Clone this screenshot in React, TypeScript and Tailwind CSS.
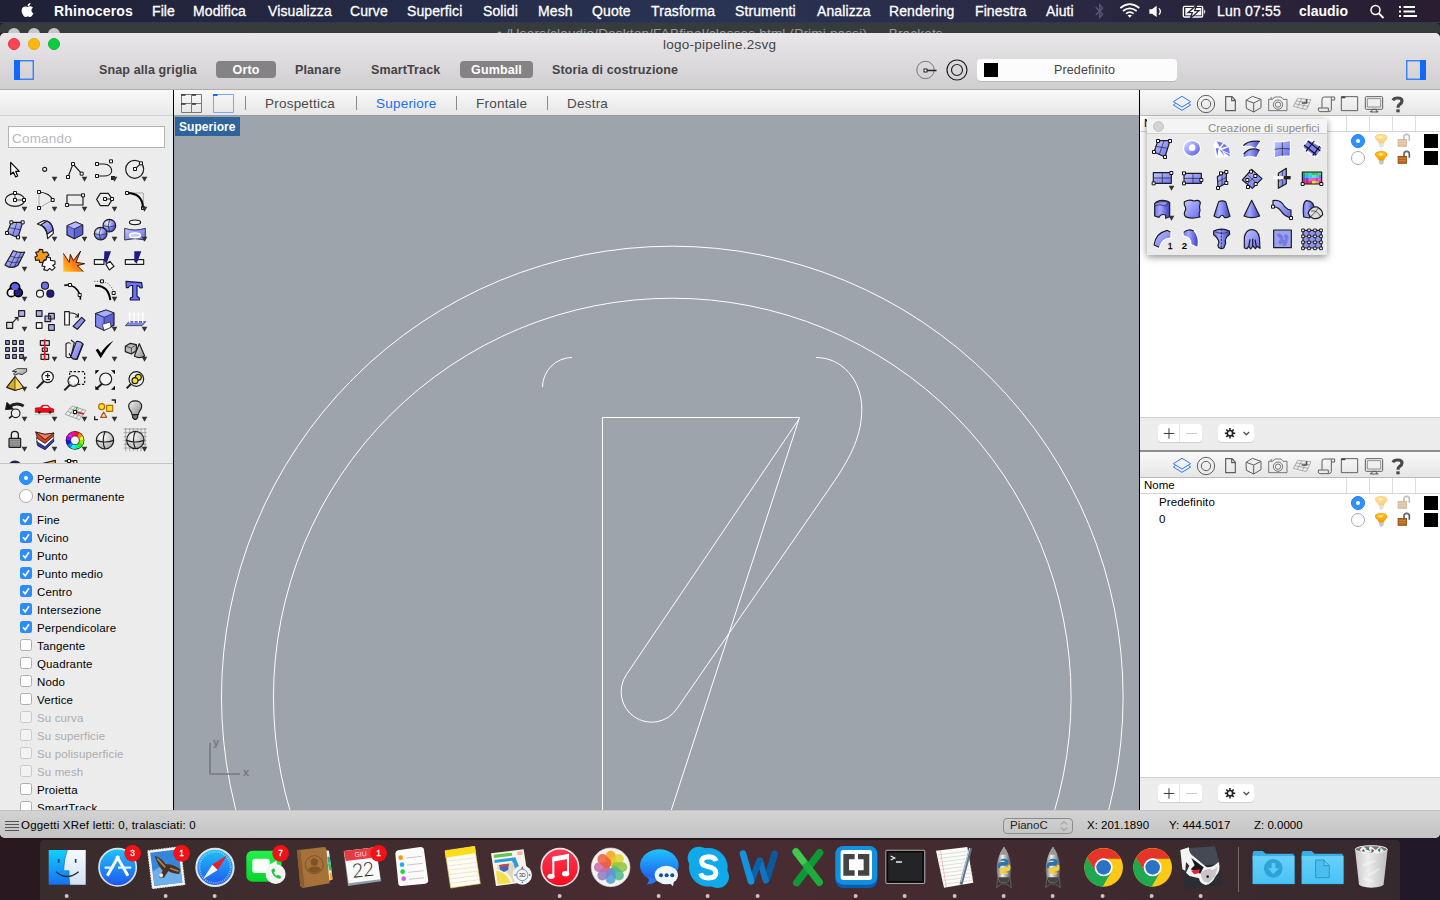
import React from "react";
import { FaApple, FaBluetoothB } from "react-icons/fa";

type Kids = { children?: React.ReactNode };

const INK = "#1c1c1c";

/* ---------- shared drawing helpers ---------- */

function Defs() {
  return (
    <svg className="absolute h-0 w-0" aria-hidden="true">
      <defs>
        <linearGradient id="blue" x1="0" y1="0" x2="1" y2="1">
          <stop offset="0" stopColor="#c3c7ff" />
          <stop offset="1" stopColor="#666cf0" />
        </linearGradient>
        <linearGradient id="tube" x1="0" y1="0" x2="1" y2="0">
          <stop offset="0" stopColor="#6e74f2" />
          <stop offset=".35" stopColor="#a4a9ff" />
          <stop offset="1" stopColor="#3c42c4" />
        </linearGradient>
        <radialGradient id="ball" cx=".35" cy=".3" r=".8">
          <stop offset="0" stopColor="#eef" />
          <stop offset=".5" stopColor="#8c92f5" />
          <stop offset="1" stopColor="#3c43b8" />
        </radialGradient>
        <radialGradient id="grayball" cx=".35" cy=".3" r=".8">
          <stop offset="0" stopColor="#fff" />
          <stop offset="1" stopColor="#a5a5a5" />
        </radialGradient>
        <linearGradient id="gray" x1="0" y1="0" x2="1" y2="1">
          <stop offset="0" stopColor="#f4f4f4" />
          <stop offset="1" stopColor="#8c8c8c" />
        </linearGradient>
        <linearGradient id="fire" x1="0" y1="1" x2="1" y2="0">
          <stop offset="0" stopColor="#ffc81c" />
          <stop offset=".45" stopColor="#ff7a12" />
          <stop offset="1" stopColor="#e81808" />
        </linearGradient>
        <linearGradient id="bulb" x1="0" y1="0" x2="0" y2="1">
          <stop offset="0" stopColor="#ffc61a" />
          <stop offset="1" stopColor="#ff9a00" />
        </linearGradient>
        <linearGradient id="sky" x1="0" y1="0" x2="0" y2="1">
          <stop offset="0" stopColor="#1fc4fb" />
          <stop offset="1" stopColor="#1f55ee" />
        </linearGradient>
        <linearGradient id="finderL" x1="0" y1="0" x2="0" y2="1">
          <stop offset="0" stopColor="#12d0ff" />
          <stop offset="1" stopColor="#1670f2" />
        </linearGradient>
        <linearGradient id="finderR" x1="0" y1="0" x2="0" y2="1">
          <stop offset="0" stopColor="#f6fafe" />
          <stop offset="1" stopColor="#d3e2f2" />
        </linearGradient>
        <linearGradient id="green" x1="0" y1="0" x2="0" y2="1">
          <stop offset="0" stopColor="#22f04d" />
          <stop offset="1" stopColor="#06d52c" />
        </linearGradient>
        <linearGradient id="red" x1="0" y1="0" x2="0" y2="1">
          <stop offset="0" stopColor="#ff3a55" />
          <stop offset="1" stopColor="#f50b20" />
        </linearGradient>
        <linearGradient id="rocket" x1="0" y1="0" x2="1" y2="0">
          <stop offset="0" stopColor="#6a6a6a" />
          <stop offset=".4" stopColor="#f0f0f0" />
          <stop offset="1" stopColor="#4a4a4a" />
        </linearGradient>
        <linearGradient id="folder" x1="0" y1="0" x2="0" y2="1">
          <stop offset="0" stopColor="#6ad0fa" />
          <stop offset="1" stopColor="#46c3f5" />
        </linearGradient>
        <linearGradient id="trash" x1="0" y1="0" x2="1" y2="0">
          <stop offset="0" stopColor="#c9c9c9" />
          <stop offset=".4" stopColor="#ececec" />
          <stop offset="1" stopColor="#bdbdbd" />
        </linearGradient>
      </defs>
    </svg>
  );
}

function N({ x, y }: { x: number; y: number }) {
  return <rect x={x - 4.5} y={y - 4.5} width={9} height={9} fill="#fff" stroke="#111" strokeWidth={3} />;
}

function Nodes({ p }: { p: [number, number][] }) {
  return (
    <>
      {p.map(([x, y]) => (
        <N key={x + "," + y} x={x} y={y} />
      ))}
    </>
  );
}

function Cell({ x, y, tri, children }: Kids & { x: number; y: number; tri?: boolean }) {
  return (
    <svg viewBox={`${x} ${y} 90 90`} className="block h-[30px] w-[30px] overflow-visible" fill="none" stroke={INK} strokeWidth={3.5} strokeLinejoin="round">
      {children}
      {tri && <path d={`M${x + 65} ${y + 65}h17l-8.500 15z`} fill="#333" stroke="none" />}
    </svg>
  );
}

/* ---------- main tool palette ---------- */

const HUES = [0, 30, 60, 90, 120, 150, 180, 210, 240, 270, 300, 330];

function arc(cx: number, cy: number, r: number, a: number, b: number) {
  const p = (d: number) => `${cx + r * Math.cos((d * Math.PI) / 180)} ${cy + r * Math.sin((d * Math.PI) / 180)}`;
  return `M${p(a)}A${r} ${r} 0 0 1 ${p(b)}`;
}

function ToolGrid() {
  return (
    <div className="grid w-[150px] grid-cols-5 auto-rows-[30px]">
      <Cell x={0} y={105}>
        <path d="M32 127V164L40 156L47 171L53 168L47 154H58Z" fill="#fff" stroke="#000" />
      </Cell>
      <Cell x={90} y={105} tri><circle cx={134} cy={148} r={6} fill="#fff" /></Cell>
      <Cell x={180} y={105} tri>
        <path d="M204 171L219 132L245 161" />
        <Nodes p={[[204, 171], [219, 132], [245, 161]]} />
      </Cell>
      <Cell x={270} y={105} tri>
        <path d="M291 132H312C326 132 335 142 335 152C335 162 325 168 312 168H291" />
        <Nodes p={[[291, 132], [291, 168], [333, 124]]} />
        <rect x={333} y={168} width={12} height={12} fill="#222" stroke="none" />
      </Cell>
      <Cell x={360} y={105} tri>
        <circle cx={404} cy={148} r={27} /><path d="M405 147L423 130" />
        <Nodes p={[[405, 147], [423, 130]]} />
      </Cell>

      <Cell x={0} y={195} tri>
        <ellipse cx={45} cy={240} rx={29} ry={19} /><path d="M45 219V240H72" strokeWidth={2.5} />
        <Nodes p={[[45, 219], [45, 240], [72, 240]]} />
      </Cell>
      <Cell x={90} y={195} tri>
        <path d="M158 240L117 264V216" stroke="#999" strokeWidth={2.5} />
        <path d="M117 216Q150 219 158 240" />
        <Nodes p={[[117, 216], [158, 240], [117, 264]]} />
      </Cell>
      <Cell x={180} y={195} tri>
        <rect x={201} y={225} width={48} height={30} />
        <Nodes p={[[249, 226], [201, 255]]} />
      </Cell>
      <Cell x={270} y={195} tri>
        <path d="M290 238L301 220H325L337 238L325 257H301ZM315 237H337" />
        <Nodes p={[[315, 237], [336, 237]]} />
      </Cell>
      <Cell x={360} y={195} tri>
        <path d="M381 219H430V264" stroke="#999" strokeWidth={2.5} />
        <path d="M381 219C412 219 428 234 429 264" stroke="#000" strokeWidth={6} />
        <Nodes p={[[381, 219], [429, 264]]} />
      </Cell>

      <Cell x={0} y={285} tri>
        <path d="M34 307H68L54 353L21 339Z" fill="url(#blue)" /><path d="M51 307L38 346M28 323L60 329" strokeWidth={2} />
        <Nodes p={[[34, 307], [68, 307], [54, 352], [21, 339]]} />
      </Cell>
      <Cell x={90} y={285} tri>
        <path d="M112 312L130 302C150 303 160 318 160 340L143 356C143 335 135 318 112 312Z" fill="#fff" />
        <path d="M122 315L141 303C152 308 158 318 159 331L142 342C140 329 132 318 122 315Z" fill="url(#blue)" />
      </Cell>
      <Cell x={180} y={285} tri>
        <path d="M201 317L227 306L248 315V343L223 356L201 345Z" fill="#7278f2" />
        <path d="M201 317L227 306L248 315L223 327Z" fill="#b5b9ff" strokeWidth={2} /><path d="M223 327L248 315V343L223 356Z" fill="#5a60d2" strokeWidth={2} />
      </Cell>
      <Cell x={270} y={285} tri>
        <circle cx={328} cy={317} r={19} fill="url(#ball)" /><circle cx={302} cy={341} r={19} fill="url(#ball)" />
        <path d="M284 341Q302 350 320 341M302 323Q293 342 302 359M310 317Q328 325 346 317M329 299Q320 317 329 335" strokeWidth={2} />
      </Cell>
      <Cell x={360} y={285} tri>
        <ellipse cx={405} cy={307} rx={17} ry={7} fill="#f4f4f4" />
        <path d="M374 325Q405 335 436 325V360Q405 352 374 360Z" fill="url(#blue)" strokeWidth={2.5} />
        <ellipse cx={405} cy={346} rx={16} ry={7} fill="#c6c9ff" stroke="#fff" strokeWidth={5} />
      </Cell>

      <Cell x={0} y={375} tri>
        <path d="M40 392Q60 400 74 396L54 436Q34 449 15 435Z" fill="url(#blue)" />
        <path d="M31 408Q48 418 66 411M22 423Q40 432 59 425M51 396L28 442M63 398L42 443" strokeWidth={2} />
      </Cell>
      <Cell x={90} y={375}>
        <path d="M107 397L116 395L118 388L128 389L129 398L141 396L147 405L139 411L140 418L132 420L129 428L119 427L118 420L107 421L105 411L112 407Z" fill="#f59a1b" />
        <path d="M130 424L139 419L140 411L151 413L152 421L165 423L165 433L158 436L165 443L156 451L149 445L142 452L131 449L135 440L126 438Z" fill="#fff" />
      </Cell>
      <Cell x={180} y={375}>
        <path d="M190 400L208 427L211 403L220 422L242 393L228 427L254 431L232 437L250 455H190Z" fill="url(#fire)" stroke="none" />
        <path d="M190 400L208 427L211 403L220 422L242 393L228 427L254 431L232 437L250 455" stroke="#1a0800" strokeWidth={2.5} />
      </Cell>
      <Cell x={270} y={375}>
        <path d="M283 419H312V433H283Z" fill="#fff" /><path d="M318 433L330 424L342 439L328 450Z" fill="#fff" />
        <path d="M313 394H333L319 432L312 421Z" fill="#1f1b85" stroke="none" />
      </Cell>
      <Cell x={360} y={375}>
        <path d="M376 419H431V433H376Z" fill="#fff" /><path d="M403 394H424L410 431L403 424Z" fill="#1f1b85" stroke="none" />
      </Cell>

      <Cell x={0} y={-15} tri>
        <circle cx={45} cy={22} r={14} fill="#5d63e8" stroke="#000" strokeWidth={5} /><circle cx={34} cy={38} r={12} fill="#f2f2fa" stroke="#000" strokeWidth={5} />
        <circle cx={55} cy={38} r={12} fill="#22207c" stroke="#000" strokeWidth={5} /><circle cx={45} cy={21} r={10} fill="#5d63e8" stroke="none" />
      </Cell>
      <Cell x={90} y={-15}>
        <circle cx={135} cy={17} r={10.5} fill="#6d73f0" /><circle cx={120} cy={41} r={10.5} fill="#fff" /><circle cx={151} cy={41} r={10.5} fill="#201c84" />
      </Cell>
      <Cell x={180} y={-15}>
        <path d="M193 16Q225 10 240 44Q242 53 241 59" stroke="#000" strokeWidth={5} /><Nodes p={[[210, 15], [239, 45]]} />
      </Cell>
      <Cell x={270} y={-15} tri>
        <path d="M285 17Q325 15 331 60" stroke="#000" strokeWidth={6} />
        <path d="M283 4H305Q335 10 341 38" strokeDasharray="3 5" strokeWidth={2.5} /><Nodes p={[[306, 4], [341, 39]]} />
      </Cell>
      <Cell x={360} y={-15}>
        <path d="M378 4L425 8L427 23L421 24Q418 17 411 17V49L418 54V60H391V54L398 51V17Q387 15 385 23L379 23Z" fill="#6d73f2" stroke="#15154a" />
      </Cell>

      <Cell x={0} y={75} tri>
        <path d="M20 127H38V145H20Z" fill="#ddd" /><path d="M56 92H74V109H56Z" fill="#a9aef5" /><path d="M38 127L53 113M44 113H54V122" />
      </Cell>
      <Cell x={90} y={75}>
        <path d="M109 92H126V109H109Z" fill="#a9aef5" /><path d="M109 128H126V145H109Z" fill="#fff" />
        <path d="M146 100H163V117H146ZM135 108H152V125H135ZM146 134H163V151H146Z" fill="#a9aef5" />
      </Cell>
      <Cell x={180} y={75}>
        <path d="M194 95H208V135H194Z" fill="#fff" /><path d="M245 112L255 121L232 148L219 139Z" fill="#8d93f5" />
        <path d="M210 99Q227 98 234 109M235 100V111H225" />
      </Cell>
      <Cell x={270} y={75} tri>
        <path d="M287 101L318 90L342 99V136L312 151L287 139Z" fill="#5a60d6" /><path d="M287 101L318 90L342 99L312 112Z" fill="#a8adff" strokeWidth={2} /><path d="M287 101L312 112V151L287 139Z" fill="#8188f6" strokeWidth={2} />
        <path d="M307 133L331 126L333 142L312 151Z" fill="#fff" strokeWidth={2} />
      </Cell>
      <Cell x={360} y={75} tri>
        <path d="M387 125H437L426 137H376Z" fill="#7f86f0" strokeWidth={2} />
        <path d="M389 128V101M402 128V101M415 128V101M428 128V101" stroke="#fff" strokeWidth={4} />
        <path d="M383 106L389 94L395 106ZM396 106L402 94L408 106ZM409 106L415 94L421 106ZM422 106L428 94L434 106Z" fill="#fff" stroke="none" />
      </Cell>

      <Cell x={0} y={165} tri>
        {[0, 1, 2].map((r) => [0, 1, 2].map((c) => <rect key={`${r}${c}`} x={17 + c * 21} y={182 + r * 21} width={11} height={11} fill="#a4a9ee" />))}
      </Cell>
      <Cell x={90} y={165} tri>
        <path d="M121 182H148V196H121ZM127 204H142V214H127ZM123 223H146V238H123Z" fill="#ddd" /><path d="M134 178V241" stroke="#e0182a" strokeWidth={5} />
      </Cell>
      <Cell x={180} y={165} tri>
        <path d="M198 192Q206 184 215 193V229Q206 237 198 230Z" fill="#eee" /><path d="M213 180L223 188L213 230L207 220" fill="#ddd" />
        <path d="M229 185Q240 182 249 192L231 238Q221 240 212 231Z" fill="url(#blue)" />
        <path d="M249 192L231 238" strokeWidth={4} />
      </Cell>
      <Cell x={270} y={165} tri>
        <path d="M287 210L294 206L303 219Q315 197 340 182Q317 208 302 235Z" fill="#000" stroke="none" />
      </Cell>
      <Cell x={360} y={165} tri>
        <path d="M376 199L391 190L409 194V212L394 222L376 215Z" fill="#bbb" /><path d="M376 199L394 204L409 194M394 204V222" strokeWidth={2} />
        <path d="M418 191L434 228Q418 238 403 228Z" fill="url(#gray)" />
      </Cell>

      <Cell x={0} y={255} tri>
        <path d="M37 274L52 266H80V275L66 284L55 281L44 286L41 281L50 275Z" fill="url(#gray)" strokeWidth={2.5} /><path d="M45 290L71 323L45 331L20 322Z" fill="#d9ad2c" /><path d="M45 290L71 323L45 331Z" fill="#f7d760" strokeWidth={2} />
      </Cell>
      <Cell x={90} y={255}>
        <path d="M110 325L132 303" strokeWidth={6} /><circle cx={143} cy={291} r={17} fill="#f7f7f7" /><path d="M143 280V294M136 287H150M137 299H150" />
      </Cell>
      <Cell x={180} y={255}>
        <path d="M209 275H254V313H209Z" strokeDasharray="7 5" /><path d="M193 331L209 315" strokeWidth={6} /><circle cx={220} cy={303} r={16} fill="#ffffffb0" />
      </Cell>
      <Cell x={270} y={255}>
        <path d="M291 325L306 311" strokeWidth={6} /><circle cx={317} cy={297} r={18} fill="#f4f4f4" />
        <path d="M286 271H298L286 283ZM345 271H333L345 283ZM286 329V317L298 329ZM345 329V317L333 329Z" fill="#000" stroke="none" />
      </Cell>
      <Cell x={360} y={255}>
        <path d="M380 325L396 309" strokeWidth={6} /><circle cx={409} cy={297} r={22} fill="#eee" />
        <circle cx={415} cy={292} r={9} fill="#ffe600" /><circle cx={405} cy={302} r={9} fill="#ffe600" />
      </Cell>

      <Cell x={0} y={345} tri>
        <path d="M27 381Q48 365 71 378" stroke="#222" strokeWidth={9} /><path d="M17 388L21 368L39 387Z" fill="#111" /><path d="M27 415L38 406" strokeWidth={5} /><circle cx={47} cy={400} r={13} fill="#eee" />
      </Cell>
      <Cell x={90} y={345} tri>
        <path d="M106 384L120 383L127 376H144L151 384L161 387V397H106Z" fill="#f00b14" stroke="#9c0007" strokeWidth={2} /><path d="M130 379H142L147 384H127Z" fill="#fff" stroke="none" />
        <circle cx={118} cy={397} r={4} fill="#222" stroke="none" /><circle cx={150} cy={397} r={4} fill="#222" stroke="none" /><path d="M103 404H165" stroke="#bbb" strokeWidth={2} />
      </Cell>
      <Cell x={180} y={345} tri>
        <path d="M216 378L258 391L238 419L195 403ZM226 381L206 408M237 385L218 411M248 388L228 415M209 386L251 400M202 394L245 409" stroke="#858585" strokeWidth={2} />
        <path d="M225 396L232 380" stroke="#18a035" /><path d="M225 396L252 402" stroke="#e01818" strokeWidth={4} /><N x={225} y={396} />
      </Cell>
      <Cell x={270} y={345} tri>
        <circle cx={305} cy={380} r={9} fill="#ffdf20" stroke="#b36a00" /><path d="M320 376H338V394H320Z" fill="#ffdf20" stroke="#b36a00" /><path d="M311 396L320 412H302Z" fill="#f4d9c0" stroke="#b0521a" />
        <path d="M335 360H346V370M284 409V419H294" strokeWidth={4} />
      </Cell>
      <Cell x={360} y={345} tri>
        <path d="M396 404C396 393 386 391 386 379C386 357 425 357 425 379C425 391 415 393 415 404Z" fill="url(#gray)" /><path d="M398 404H413V413L408 418H403L398 413Z" fill="#777" />
      </Cell>

      <Cell x={0} y={435} tri>
        <path d="M34 476V464Q34 454 44 454Q55 454 55 464V476" strokeWidth={4} /><rect x={27} y={475} width={35} height={27} rx={2} fill="#9c9c9c" /><path d="M30 482H59M30 489H59M30 496H59" stroke="#6f6f6f" strokeWidth={2} />
      </Cell>
      <Cell x={90} y={435} tri>
        <path d="M110 484L113 497L135 509L162 484L160 476L135 500Z" fill="#2c3ab8" strokeWidth={2.5} /><path d="M109 473L112 486L135 500L161 476V468L135 490Z" fill="#fff" strokeWidth={2} />
        <path d="M107 456L112 475L135 490L160 468L162 459L135 463Z" fill="#d8401c" strokeWidth={2} /><path d="M107 456L135 463L162 459L135 479Z" fill="#ff7a5c" strokeWidth={2.5} />
      </Cell>
      <Cell x={180} y={435} tri>
        <circle cx={225} cy={481} r={28} fill="#222" stroke="none" />
        {HUES.map((h) => <path key={h} d={arc(225, 481, 20, h - 90, h - 58)} stroke={`hsl(${h} 95% 52%)`} strokeWidth={12} />)}
        <circle cx={225} cy={481} r={13} fill="#f2f2f2" stroke="#333" strokeWidth={2} />
      </Cell>
      <Cell x={270} y={435}>
        <circle cx={315} cy={481} r={26} fill="url(#grayball)" /><path d="M289 481Q315 491 341 481M315 455Q304 481 315 507" />
      </Cell>
      <Cell x={360} y={435} tri>
        <path d="M371 447H440M371 458H440M371 470H440M371 481H440M371 493H440M371 504H440M377 444V514M389 444V514M400 444V514M412 444V514M423 444V514M435 444V514" stroke="#8a8a8a" strokeWidth={2} />
        <circle cx={406} cy={480} r={26} fill="url(#grayball)" fillOpacity={0.9} /><path d="M380 481Q406 491 432 481M406 454Q395 480 406 506" />
      </Cell>

      <Cell x={0} y={525}><circle cx={45} cy={562} r={19} fill="#1c1a84" /></Cell>
      <Cell x={90} y={525}><path d="M130 550L166 541V560H122Z" fill="#f8bd18" /></Cell>
      <Cell x={180} y={525}><path d="M194 543H226V560" strokeWidth={4} /><Nodes p={[[207, 543], [226, 546]]} /></Cell>
    </div>
  );
}

/* ---------- surface creation palette ---------- */

const MAP = ["#36a84a", "#1fd36c", "#2fe0a0", "#35c25a", "#22d04a", "#3ce07a", "#2a7fe8", "#29b8e6", "#2cd3f0", "#5bdcf0", "#6ab0f0", "#4a88ea", "#b126c8", "#7a3be0", "#e06ad8", "#f05ab0", "#c83ae0", "#e54ad0", "#e81f7a", "#d9263a", "#f0357a", "#f0e040", "#f0a03a", "#e83a5a"];

function SurfaceGrid() {
  return (
    <div className="grid w-[180px] grid-cols-6 auto-rows-[30px]">
      <Cell x={36} y={147}>
        <path d="M69 167H105L90 216L57 201Z" fill="url(#blue)" /><path d="M87 167L73 208M63 184L98 190" strokeWidth={2} /><Nodes p={[[69, 168], [105, 168], [90, 216], [57, 201]]} />
      </Cell>
      <Cell x={126} y={147}>
        <ellipse cx={171} cy={190} rx={24} ry={22} fill="#fff" stroke="#fff" strokeWidth={7} /><ellipse cx={171} cy={190} rx={17} ry={15} stroke="url(#blue)" strokeWidth={14} /><circle cx={172} cy={187} r={9} fill="#fff" stroke="none" />
      </Cell>
      <Cell x={216} y={147}>
        <path d="M243 167Q282 175 286 212L245 216L238 180Z" fill="#fff" stroke="#fff" strokeWidth={4} />
        <path d="M245 169L254 186L264 173ZM267 176L257 190L277 184ZM281 187L260 195L285 206ZM242 190L251 189L247 214ZM253 193L262 198L268 214ZM264 200L283 208L285 215Z" fill="#7278f2" stroke="none" />
      </Cell>
      <Cell x={306} y={147}>
        <path d="M325 182Q338 166 375 169L362 189Q344 180 325 182Z" fill="url(#tube)" stroke="#fff" strokeWidth={6} /><path d="M325 182Q338 166 375 169L362 189Q344 180 325 182Z" fill="url(#tube)" stroke="none" /><path d="M325 182Q338 166 375 169" />
        <path d="M326 207Q346 184 374 196L364 216Q342 209 326 217Z" fill="url(#tube)" stroke="#fff" strokeWidth={6} /><path d="M326 207Q346 184 374 196L364 216Q342 209 326 217Z" fill="url(#tube)" stroke="none" /><path d="M326 207Q346 184 374 196" />
      </Cell>
      <Cell x={396} y={147}>
        <path d="M419 171Q440 174 465 168L464 212Q440 211 420 216Z" fill="url(#blue)" stroke="#fff" strokeWidth={6} /><path d="M419 171Q440 174 465 168L464 212Q440 211 420 216Z" fill="url(#blue)" stroke="none" /><path d="M442 173V212M419 193Q442 188 465 192" strokeWidth={2} />
      </Cell>
      <Cell x={486} y={147}>
        <path d="M523 170L552 188L540 208L512 186Z" fill="#fff" stroke="#fff" strokeWidth={18} /><path d="M521 169L557 189L541 211L508 186Z" fill="#7c82f4" stroke="#7c82f4" strokeWidth={5} />
        <path d="M518 168L556 198M507 180L544 209M538 168L513 199M555 183L533 212" stroke="#111" />
      </Cell>

      <Cell x={36} y={237} tri><path d="M55 263H109V295H55Z" fill="url(#blue)" /><path d="M82 263V295M55 279H109" strokeWidth={2} /><Nodes p={[[109, 264], [56, 295]]} /></Cell>
      <Cell x={126} y={237}><path d="M147 265H199V295H147Z" fill="url(#blue)" /><path d="M174 265V295M147 280H199" strokeWidth={2} /><Nodes p={[[147, 265], [147, 295], [199, 285]]} /></Cell>
      <Cell x={216} y={237}><path d="M247 275L274 258V294L249 308Z" fill="url(#blue)" /><path d="M261 268V302M248 291L274 277" strokeWidth={2} /><Nodes p={[[258, 265], [274, 261], [274, 294], [249, 309]]} /></Cell>
      <Cell x={306} y={237}><path d="M350 253L381 281L352 310L322 285Z" fill="url(#blue)" /><path d="M336 268L366 296M366 267L337 297" strokeWidth={2} /><Nodes p={[[348, 260], [361, 273], [337, 285], [362, 297], [339, 306]]} /></Cell>
      <Cell x={396} y={237}><path d="M430 265L454 250V296L430 310Z" fill="url(#blue)" /><path d="M442 258V303M430 290L454 274" strokeWidth={2} /><path d="M415 278H445" stroke="#fff" strokeWidth={9} /><path d="M447 278H467" stroke="#222" strokeWidth={10} /></Cell>
      <Cell x={486} y={237}>
        {MAP.map((c, i) => <rect key={i} x={502 + (i % 6) * 9.7} y={261 + Math.floor(i / 6) * 9} width={9.8} height={9.2} fill={c} stroke="none" />)}
        <path d="M502 261H560V297H502Z" /><Nodes p={[[503, 297], [559, 297]]} />
      </Cell>

      <Cell x={36} y={327} tri><path d="M59 356Q66 346 82 346Q98 346 104 353V395L92 400V390Q78 385 72 397L59 393Z" fill="url(#tube)" /><path d="M59 356Q80 345 104 353Q90 357 92 363Q74 356 59 362Z" strokeWidth={2} fill="#8d93f8" /></Cell>
      <Cell x={126} y={327}><path d="M148 350Q165 342 176 348Q193 343 196 352Q192 365 195 377Q190 392 195 396Q172 402 157 397Q145 394 149 380Q156 372 148 360Z" fill="url(#blue)" /></Cell>
      <Cell x={216} y={327}><path d="M251 350Q261 345 272 350L285 394Q276 400 268 397Q262 384 253 398Q245 399 237 393Z" fill="url(#tube)" /></Cell>
      <Cell x={306} y={327}><path d="M350 346L374 393Q350 403 327 393Z" fill="url(#tube)" /></Cell>
      <Cell x={396} y={327}><path d="M414 347Q437 342 449 365Q458 375 468 375V399Q449 395 437 377Q429 366 414 365Z" fill="url(#blue)" /><Nodes p={[[414, 365], [468, 399]]} /></Cell>
      <Cell x={486} y={327}>
        <path d="M506 396Q501 352 514 347Q535 348 537 366L524 399Z" fill="url(#tube)" /><path d="M519 384Q529 362 547 366Q564 376 563 389Q552 404 534 400Q523 395 519 384Z" fill="#ddd" /><path d="M529 378Q545 375 556 393M550 369Q542 382 528 394" strokeWidth={2} />
      </Cell>

      <Cell x={36} y={417}><path d="M57 480Q61 445 96 436L106 441V458Q80 457 72 487Z" fill="url(#blue)" stroke="#fff" strokeWidth={7} /><path d="M57 480Q61 445 96 436L106 441V458Q80 457 72 487Z" fill="url(#blue)" stroke="none" /><path d="M72 487L57 480Q61 445 96 436L106 441" /><text x={98} y={491} fontSize={26} fontFamily="Liberation Sans" fill="#000" stroke="#000" strokeWidth={0.8}>1</text></Cell>
      <Cell x={126} y={417}><path d="M146 442Q160 430 176 438Q192 455 187 485L169 477Q171 457 146 451Z" fill="url(#blue)" stroke="#fff" strokeWidth={7} /><path d="M146 442Q160 430 176 438Q192 455 187 485L169 477Q171 457 146 451Z" fill="url(#tube)" stroke="none" /><path d="M146 442Q160 430 176 438" /><text x={140} y={491} fontSize={29} fontWeight={700} fontFamily="Liberation Sans" fill="#000" stroke="none">2</text></Cell>
      <Cell x={216} y={417}><path d="M236 438Q260 427 283 438L284 448Q267 461 272 474L267 488Q258 494 250 486Q247 480 252 472Q250 459 236 449Z" fill="url(#tube)" /><path d="M240 440Q260 450 281 440" fill="#8087f4" strokeWidth={2} /><path d="M259 432V492" strokeDasharray="6 4" strokeWidth={2.5} /></Cell>
      <Cell x={306} y={417}><path d="M328 489V457Q333 434 350 434Q368 434 373 457L375 490L366 484L361 491L354 483L347 492L341 484L336 491Z" fill="url(#blue)" /><path d="M341 486L345 463M353 485V461M364 485L360 464" /></Cell>
      <Cell x={396} y={417}><rect x={416} y={435} width={53} height={53} fill="#9ba2f0" /><path d="M432 451L439 457M453 454L455 459M436 472L441 466M448 477L452 469" stroke="#5158cf" strokeWidth={12} strokeLinecap="round" opacity={0.5} /></Cell>
      <Cell x={486} y={417}>
        <path d="M504 436H559V489H504Z" fill="#8d94ee" /><path d="M522 436V489M541 436V489M504 454H559M504 471H559" strokeWidth={2} />
        {[0, 1, 2, 3].map((r) => [0, 1, 2, 3].map((c) => <rect key={`${r}-${c}`} x={500 + c * 18} y={432 + r * 18} width={8} height={8} fill="#fff" strokeWidth={3} />))}
      </Cell>
    </div>
  );
}

/* ---------- right side panels ---------- */

function PIcon({ i, children }: Kids & { i: number }) {
  return (
    <svg viewBox={`${105 + i * 72} 15 72 75`} className="block h-[25px] w-[24px]" fill="none" stroke="#5f5f5f" strokeWidth={3}>
      {children}
    </svg>
  );
}

function PanelTabs() {
  return (
    <div className="flex h-[26px] shrink-0 border-b border-[#b9b9b9] bg-gradient-to-b from-[#f9f9f9] to-[#e6e6e6] pl-[30px]">
      <PIcon i={0}><path d="M141 34L167 50L141 66L115 50Z" stroke="#2f7cf6" /><path d="M122 55L115 60L141 76L167 60L160 55" stroke="#2f7cf6" /></PIcon>
      <PIcon i={1}><circle cx={213} cy={57} r={26} /><circle cx={213} cy={57} r={14} /></PIcon>
      <PIcon i={2}><path d="M272 35H291L301 46V77H272ZM290 35V47H301" strokeWidth={3.500} /></PIcon>
      <PIcon i={3}><path d="M333 46L352 34L378 43V68L356 81L334 70ZM333 46L356 54L378 43M356 54V81" /></PIcon>
      <PIcon i={4}><path d="M401 43H413L419 36H438L444 43H456V77H401Z" strokeWidth={2.500} /><circle cx={429} cy={59} r={14} strokeWidth={2.500} /><circle cx={429} cy={59} r={8} strokeWidth={2.500} /><path d="M406 39H412" /></PIcon>
      <PIcon i={5}><path d="M488 40L528 44L514 74L475 64ZM500 41L487 67M514 42L502 71M483 48L525 53M479 56L520 64" stroke="#8e8e8e" strokeWidth={2} /><path d="M500 54H515V42" stroke="#555" strokeWidth={4} /></PIcon>
      <PIcon i={6}><path d="M561 68V42Q561 36 568 36H599V45H589V74Q588 80 581 80H555Q548 80 550 69H580V79M589 45V37" /></PIcon>
      <PIcon i={7}><path d="M619 35H668V77H619Z" /><path d="M619 37H631" strokeWidth={5} stroke="#444" /></PIcon>
      <PIcon i={8}><rect x={691} y={35} width={52} height={38} rx={3} /><path d="M697 41H737V66H697Z" strokeWidth={2} /><path d="M711 73H724V79H729V81H706V79H711Z" /></PIcon>
      <svg viewBox="753 15 72 75" className="block h-[25px] w-[24px]" fill="none" stroke="#4a4a4a">
        <path d="M774 46Q777 39 788 39Q801 39 801 48Q801 54 794 58Q789 61 789 68" strokeWidth={9.500} /><rect x={784} y={73} width={10} height={9} fill="#4a4a4a" stroke="none" />
      </svg>
    </div>
  );
}

function Radio({ on }: { on?: boolean }) {
  return on ? (
    <span className="flex h-[14px] w-[14px] shrink-0 items-center justify-center rounded-full border border-[#1f7df0] bg-[#2f91ff]">
      <span className="h-[4px] w-[4px] rounded-full bg-white" />
    </span>
  ) : (
    <span className="h-[14px] w-[14px] shrink-0 rounded-full border border-[#ababab] bg-white" />
  );
}

function LayerRow({ name, on }: { name: string; on?: boolean }) {
  return (
    <div className="flex h-[17px] items-center">
      <span className="w-[211px] pl-[19px] text-[11.500px] tracking-[0.080px] text-black">{name}</span>
      <Radio on={on} />
      <svg viewBox="0 0 72 51" className={on ? "ml-[4px] h-[17px] w-[24px] shrink-0 opacity-50" : "ml-[4px] h-[17px] w-[24px] shrink-0"}>
        <path d="M30 34C30 27 19 24 19 15C19 5 54 5 54 15C54 24 44 27 44 34Z" fill="url(#bulb)" stroke="#f08a00" strokeWidth={2} />
        <ellipse cx={35} cy={16} rx={6} ry={4} fill="#ffe98a" />
        <path d="M31 35H43V43L37 47L31 43Z" fill="#c9c9c9" stroke="#a5a5a5" strokeWidth={1} />
      </svg>
      <svg viewBox="0 0 72 51" className={on ? "h-[17px] w-[24px] shrink-0 opacity-40" : "h-[17px] w-[24px] shrink-0"} fill="none">
        <path d="M33 24V15Q33 7 41 7Q49 7 49 15V26" stroke="#5f5f5f" strokeWidth={5} /><path d="M35 14Q36 9 41 9Q46 9 47 14" stroke="#bbb" strokeWidth={1.500} />
        <rect x={15} y={22} width={26} height={21} fill="#b9651a" stroke="#7d430e" strokeWidth={2} /><path d="M17 28H39M17 35H39" stroke="#e0994c" strokeWidth={2} />
      </svg>
      <span className="ml-[7px] h-[14px] w-[14px] shrink-0 bg-black" />
    </div>
  );
}

function PanelFooter() {
  return (
    <div className="flex h-[33px] shrink-0 gap-[16px] border-t border-[#cfcfcf] bg-[#ececec] pt-[6px] pl-[18px]">
      <div className="flex h-[18px] w-[44px] rounded-[4px] bg-white shadow-[0_1px_0_#cfcfcf]">
        <svg viewBox="0 0 22 18" className="h-[18px] w-[22px] border-r border-[#e2e2e2]"><path d="M6 9.500H17M11.500 4V15" stroke="#333" fill="none" /></svg>
        <svg viewBox="0 0 22 18" className="h-[18px] w-[22px]"><path d="M6 9.500H17" stroke="#ccc" fill="none" /></svg>
      </div>
      <div className="flex h-[18px] w-[36px] rounded-[4px] bg-white shadow-[0_1px_0_#cfcfcf]">
        <svg viewBox="0 0 36 18" className="h-[18px] w-[36px]" fill="none" stroke="#222">
          <circle cx={12} cy={9.2} r={2.700} strokeWidth={1.700} />
          {[0, 45, 90, 135].map((a) => <path key={a} d="M12 4V6.200M12 12.200V14.400" strokeWidth={1.600} transform={`rotate(${a} 12 9.200)`} />)}
          <path d="M25.500 8L28.300 10.800L31.100 8" stroke="#555" strokeWidth={1.400} />
        </svg>
      </div>
    </div>
  );
}

function Panel({ named }: { named: boolean }) {
  return (
    <>
      <PanelTabs />
      <div className="flex h-[16px] shrink-0 border-b border-[#d5d5d5] bg-white">
        <span className="w-[206px] pl-[4px] text-[11.500px] leading-[15px] text-black">Nome</span>
        <span className="w-[23px] border-l border-[#dedede]" /><span className="w-[23px] border-l border-[#dedede]" />
        <span className="w-[23px] border-l border-[#dedede]" /><span className="w-[23px] border-l border-[#dedede]" />
      </div>
      <div className="min-h-0 flex-1 bg-white">
        <LayerRow name={named ? "Predefinito" : ""} on />
        <LayerRow name={named ? "0" : ""} />
      </div>
      <PanelFooter />
    </>
  );
}

/* ---------- left snap options ---------- */

function Check({ label, state }: { label: string; state: "on" | "off" | "dim" }) {
  return (
    <div className="flex h-[18px] shrink-0 items-center pl-[20px]">
      {state === "on" ? (
        <svg viewBox="0 0 12 12" className="h-[12px] w-[12px] rounded-[2.500px] bg-[#2d8cfb]"><path d="M3 6.200L5.200 8.800L9 3.200" fill="none" stroke="#fff" strokeWidth={1.700} /></svg>
      ) : (
        <span className={state === "dim" ? "h-[12px] w-[12px] rounded-[2.500px] border border-[#c9c9c9] bg-[#f3f3f3]" : "h-[12px] w-[12px] rounded-[2.500px] border border-[#aeaeae] bg-white"} />
      )}
      <span className={state === "dim" ? "pt-[2px] pl-[5px] text-[11.500px] leading-[16px] tracking-[0.130px] text-[#adadad]" : "pt-[2px] pl-[5px] text-[11.500px] leading-[16px] tracking-[0.130px] text-black"}>{label}</span>
    </div>
  );
}

const SNAPS: [string, "on" | "off" | "dim"][] = [
  ["Fine", "on"], ["Vicino", "on"], ["Punto", "on"], ["Punto medio", "on"], ["Centro", "on"], ["Intersezione", "on"], ["Perpendicolare", "on"],
  ["Tangente", "off"], ["Quadrante", "off"], ["Nodo", "off"], ["Vertice", "off"],
  ["Su curva", "dim"], ["Su superficie", "dim"], ["Su polisuperficie", "dim"], ["Su mesh", "dim"], ["Proietta", "off"], ["SmartTrack", "off"],
];

/* ---------- dock ---------- */

function D({ x, y, dot, badge, children }: Kids & { x: number; y: number; dot?: boolean; badge?: string }) {
  return (
    <svg viewBox={`${x} ${y} 148 180`} className="block h-[60px] w-[49.300px] shrink-0 overflow-visible" fill="none" fontFamily="Liberation Sans">
      {children}
      {badge && (
        <>
          <circle cx={x + 122} cy={y + 40} r={25} fill="#f01119" />
          <text x={x + 122} y={y + 48} fontSize={25} fill="#fff" stroke="#fff" strokeWidth={0.8} textAnchor="middle">{badge}</text>
        </>
      )}
      {dot && <circle cx={x + 74} cy={y + 168} r={6} fill="#d9bfc4" />}
    </svg>
  );
}

function Chrome({ x }: { x: number }) {
  return (
    <D x={x} y={210} dot>
      <g transform={`translate(${x + 77} 292)`}>
        <circle r={58} fill="#fbc916" />
        <path d="M-50 -29A58 58 0 0 0 -3 58L24 12L0 26L-22 13Z" fill="#1fa84f" />
        <path d="M-50 -29L-24 12L-10 -26H53A58 58 0 0 0 50 -29A58 58 0 0 0 -50 -29Z" fill="#e5352b" />
        <circle r={27} fill="#fff" /><circle r={22} fill="#2a73c4" />
      </g>
    </D>
  );
}

function Rocket({ x }: { x: number }) {
  return (
    <D x={x} y={210} dot>
      <g transform={`translate(${x + 75} 0)`}>
        <path d="M-18 318L-22 353L-8 342H8L22 353L18 318Z" fill="#333" stroke="#777" strokeWidth={2} />
        <path d="M0 230Q24 265 22 300Q20 325 12 338H-12Q-20 325 -22 300Q-24 265 0 230Z" fill="url(#rocket)" />
        <path d="M-18 294Q-21 277 -8 276H2V272H-12Q-10 265 2 266Q15 267 13 278Q13 286 4 287H-6Q-13 287 -13 294Z" fill="#2a75ae" />
        <path d="M18 284Q24 302 10 304H0V308H14Q12 314 0 313Q-14 312 -12 301Q-12 293 -3 292H6Q14 291 13 284Z" fill="#f7ce3c" />
        <path d="M-17 322H17L12 338H-12Z" fill="#444" />
        <path d="M0 230Q9 243 13 254H-13Q-9 243 0 230Z" fill="#999" />
      </g>
    </D>
  );
}

const PETALS = ["#f9a01b", "#ddd32c", "#8cc63f", "#4fb98c", "#4a9fd8", "#8c7cc0", "#c86aa8", "#ef5a3c"];

function Dock() {
  return (
    <div className="flex h-[60px] w-[1360px] rounded-t-[4px] bg-gradient-to-r from-[#392c2c] via-[#492c32] to-[#36292d] pl-[2.400px]">
      <D x={37} y={30} dot>
        <rect x={57} y={60} width={111} height={104} fill="url(#finderL)" /><path d="M113 60H168V164H121Q117 142 118 122H102Q104 85 113 60Z" fill="url(#finderR)" />
        <path d="M87 87V98M138 87V98" stroke="#183f66" strokeWidth={5} /><path d="M79 125Q112 154 147 125" stroke="#172c45" strokeWidth={4} /><path d="M113 60Q103 85 102 122H118Q117 145 121 164" stroke="#1a6cc0" strokeWidth={2} />
      </D>
      <D x={185} y={30} badge="3">
        <circle cx={262} cy={112} r={56} fill="url(#sky)" stroke="#dfe3e8" strokeWidth={5} />
        <path d="M265 78L231 137M259 78L293 137" stroke="#fff" strokeWidth={9} /><path d="M223 113H249M263 113H303" stroke="#e4f2ff" strokeWidth={7} />
      </D>
      <D x={333} y={30} dot badge="1">
        <g transform="rotate(-7 408 113)">
          <rect x={363} y={59} width={92} height={108} fill="#3685d9" stroke="#f6f6f6" strokeWidth={7} /><rect x={360} y={56} width={98} height={114} stroke="#e8e8e8" strokeWidth={4} strokeDasharray="4 4" />
          <path d="M367 120Q410 90 451 132V163H367Z" fill="#6eb0ec" />
          <path d="M379 74Q398 80 408 103Q430 104 449 122L446 137Q424 133 414 124L398 142L384 139L397 121Q383 99 379 74Z" fill="#4a3020" /><path d="M385 82L406 112M420 116L444 128" stroke="#a8825c" strokeWidth={5} /><circle cx={391} cy={134} r={6} fill="#f0e3cc" />
        </g>
      </D>
      <D x={481} y={30} dot>
        <circle cx={556} cy={112} r={56} fill="url(#sky)" stroke="#e4e4e4" strokeWidth={6} /><circle cx={556} cy={112} r={47} stroke="#d2f0ff" strokeWidth={6} strokeDasharray="2 4" opacity={0.800} />
        <path d="M592 76L564 120L548 104Z" fill="#f01c24" /><path d="M520 148L548 104L564 120Z" fill="#f4f4f4" />
      </D>
      <D x={629} y={30} badge="7">
        <rect x={648} y={62} width={106} height={93} rx={18} fill="url(#green)" /><rect x={666} y={86} width={52} height={43} rx={8} fill="#f8fff8" /><path d="M718 103L739 92V123L718 114Z" fill="#fff" />
        <circle cx={736} cy={132} r={30} fill="#f4f4f4" /><path d="M723 121Q728 145 750 147L752 139L743 134L738 137Q732 134 731 127L735 122L731 114Z" fill="#14c93c" />
      </D>
      <D x={777} y={30}>
        <path d="M888 61L897 62L908 148L896 153Z" fill="#eee" /><path d="M892 80L899 80L902 98H894Z" fill="#25a9a0" /><path d="M894 100H902L905 121H897Z" fill="#37bf55" /><path d="M899 128H905L907 148L900 150Z" fill="#f4a91f" />
        <path d="M801 61L882 51Q888 51 889 57L899 160L818 174L811 168Z" fill="#a5733a" /><path d="M801 61L811 58L824 172L818 174L811 168Z" fill="#8c5e2f" />
        <circle cx={853} cy={104} r={27} stroke="#7f5227" strokeWidth={3} /><circle cx={853} cy={96} r={11} fill="#7f5227" /><path d="M833 120Q842 107 853 110Q866 107 873 119Q855 138 833 120Z" fill="#7f5227" />
      </D>
      <D x={925} y={30} badge="1">
        <path d="M942 64L1036 52L1055 154L955 168Z" fill="#8ba0a6" /><path d="M943 63L1040 52L1052 148L957 160Z" fill="#fafafa" /><path d="M943 63L1040 52L1044 82L948 93Z" fill="#e73b43" />
        <text x={975} y={82} fontSize={21} fill="#ffd5d5" transform="rotate(-6 975 82)">GIU</text><text x={969} y={143} fontSize={58} fontFamily="Lato" fontWeight={300} fill="#222" letterSpacing={-1} transform="rotate(-6 970 143)">22</text>
      </D>
      <D x={1073} y={30}>
        <path d="M1106 61L1173 51Q1183 51 1184 59L1197 153Q1196 160 1188 161L1117 168Q1108 168 1107 161L1098 71Q1098 63 1106 61Z" fill="#fbfbfb" />
        <circle cx={1114} cy={83} r={7} fill="#ff9500" /><circle cx={1118} cy={104} r={7} fill="#20aef5" /><circle cx={1120} cy={125} r={7} fill="#24d33b" /><circle cx={1123} cy={146} r={7} fill="#cf5ce3" />
        <path d="M1131 84L1177 79M1133 105L1180 100M1136 127L1183 122M1139 148L1185 143" stroke="#c8c8c8" strokeWidth={3} />
      </D>
      <D x={1221} y={30}>
        <path d="M1245 62L1334 49L1351 161L1262 174Z" fill="#fffdf2" stroke="#d7c35b" strokeWidth={2} /><path d="M1245 62L1334 49L1338 69L1247 83Z" fill="#ffdc18" />
        <path d="M1250 94L1338 83M1253 108L1340 97M1255 121L1342 110M1257 134L1344 123M1259 147L1346 136M1261 160L1348 149" stroke="#dcd8cf" strokeWidth={2} />
      </D>
      <D x={-12} y={30}>
        <path d="M3 70L101 58L116 155L18 168Z" fill="#f7f4e9" /><path d="M11 74L65 68L67 77L12 84Z" fill="#68c250" /><path d="M13 90L76 82L105 152L88 154L66 92L14 99Z" fill="#2a9ce4" /><path d="M18 122Q50 125 62 159L23 163Z" fill="#f6df4c" /><path d="M22 105L70 97L83 150L69 158Q58 120 22 119Z" fill="#e2d8bd" />
        <path d="M28 105L56 101L55 119L42 126L30 119Z" fill="#3a68b7" /><path d="M28 105L56 101V108L29 111Z" fill="#dc4148" /><path d="M81 65L97 64V74L83 76Z" fill="#f3b2b2" />
        <circle cx={97} cy={135} r={29} fill="#f3f3f3" /><circle cx={97} cy={135} r={17} stroke="#5d9ad0" strokeWidth={3} /><text x={97} y={141} fontSize={16} fill="#444" textAnchor="middle">3D</text><path d="M97 109L101 116H93Z" fill="#e02a2a" /><path d="M73 135H77M117 135H121M97 155V159" stroke="#333" strokeWidth={3} />
      </D>
      <D x={136} y={30} dot>
        <circle cx={211} cy={112} r={56} fill="url(#red)" stroke="#f1e5e6" strokeWidth={5} /><path d="M191 138V86L235 77V129" stroke="#fff" strokeWidth={6} /><path d="M188 80L238 71V86L188 95Z" fill="#fff" /><ellipse cx={184} cy={139} rx={11} ry={8} fill="#fff" /><ellipse cx={228} cy={131} rx={11} ry={8} fill="#fff" />
      </D>
      <D x={284} y={30}>
        <circle cx={361} cy={112} r={58} fill="#f5f3f0" stroke="#d8d8d8" strokeWidth={2} />
        {PETALS.map((c, i) => <rect key={c} x={346} y={62} width={30} height={47} rx={15} fill={c} fillOpacity={0.850} transform={`rotate(${i * 45} 361 112)`} />)}
      </D>
      <D x={432} y={30} dot>
        <ellipse cx={508} cy={106} rx={58} ry={48} fill="url(#sky)" /><path d="M475 139Q480 155 470 163Q490 164 501 150Z" fill="#2878ef" />
        <ellipse cx={529} cy={135} rx={35} ry={28} fill="#eef6fd" /><path d="M536 157L549 169L552 153Z" fill="#eef6fd" />
        <circle cx={513} cy={136} r={6} fill="#1c4d90" /><circle cx={530} cy={136} r={6} fill="#1c4d90" /><circle cx={547} cy={136} r={6} fill="#1c4d90" />
      </D>
      <D x={580} y={30} dot>
        <circle cx={656} cy={112} r={58} fill="#10a9ea" /><circle cx={628} cy={84} r={34} fill="#10a9ea" /><circle cx={684} cy={140} r={34} fill="#10a9ea" />
        <path d="M679 93Q675 80 657 80Q636 81 636 95Q637 106 655 110Q679 115 679 129Q678 144 656 144Q637 144 633 130" stroke="#fff" strokeWidth={15} />
      </D>
      <D x={728} y={30} dot>
        <path d="M853 72L829 150" stroke="#0d579c" strokeWidth={20} strokeLinecap="round" /><path d="M809 92L826 151" stroke="#1272bd" strokeWidth={18} strokeLinecap="round" />
        <path d="M807 92L783 154" stroke="#0b61aa" strokeWidth={18} strokeLinecap="round" /><path d="M758 71L782 154" stroke="#1592dc" strokeWidth={20} strokeLinecap="round" />
      </D>
      <D x={875} y={30}>
        <path d="M988 68L919 158" stroke="#0d9a35" strokeWidth={22} strokeLinecap="round" /><path d="M917 65L987 157" stroke="#1dab3d" strokeWidth={22} strokeLinecap="round" /><path d="M917 65L938 93" stroke="#45c750" strokeWidth={20} strokeLinecap="round" />
      </D>
      <D x={1023} y={30} dot>
        <rect x={1036} y={48} width={126} height={126} rx={24} fill="#0a5caf" /><rect x={1036} y={48} width={126} height={116} rx={24} fill="#1190df" /><rect x={1052} y={60} width={94} height={90} rx={8} fill="#fff" />
        <path d="M1060 72H1094V88H1077V121H1094V137H1060ZM1138 72H1104V88H1121V121H1104V137H1138Z" fill="#444" />
      </D>
      <D x={1171} y={30} dot>
        <rect x={1189} y={61} width={116} height={99} rx={3} fill="#222426" stroke="#a5a5a5" strokeWidth={4} /><rect x={1193} y={65} width={108} height={91} stroke="#080808" strokeWidth={5} />
        <path d="M1203 78L1215 84L1203 90M1219 96H1237" stroke="#eee" strokeWidth={4} />
      </D>
      <D x={-31} y={210} dot>
        <path d="M-13 242L81 231L99 338L11 353Z" fill="#fbfbf7" /><path d="M-9 255L84 243M-7 266L86 254M-5 277L88 265M-3 288L90 276M-1 299L92 287M1 310L94 298M3 321L96 309M5 332L98 320M8 343L98 331" stroke="#cfcfcb" strokeWidth={2} /><path d="M0 241L18 351" stroke="#f3a5a5" strokeWidth={2} />
        <path d="M91 234L62 344" stroke="#5f7486" strokeWidth={9} /><path d="M88 234L62 336" stroke="#b5ccda" strokeWidth={3} />
      </D>
      <Rocket x={117} />
      <Rocket x={265} />
      <Chrome x={413} />
      <Chrome x={561} />
      <D x={709} y={210} dot>
        <path d="M728 235L824 228Q832 228 834 236L848 338Q848 345 841 347L745 356Q737 356 735 348L720 246Q721 236 728 235Z" fill="#2b2d34" /><path d="M740 235L826 229L841 282L794 286L763 265Z" fill="#454954" />
        <path d="M722 240L748 232Q746 250 765 262L800 291Q816 295 837 276Q846 302 827 320Q817 342 798 345Q781 342 778 325L750 318L739 308L749 287L739 276L737 302L728 298Z" fill="#f3f3f3" />
        <path d="M755 264L792 292L782 311L753 298L765 286Z" fill="#18191d" /><path d="M754 302L780 298L778 309L764 313Z" fill="#e42532" /><path d="M783 308Q801 292 821 300L833 290Q833 320 807 338Q786 339 783 308Z" fill="#c9c5c6" /><circle cx={804} cy={320} r={4} fill="#222" />
      </D>
      <div className="mt-[7px] mr-[10px] ml-[12px] h-[45px] w-px shrink-0 bg-[#7a6568]" />
      <D x={927} y={210}>
        <path d="M938 250Q938 243 944 243H968L977 251H1061V270H938Z" fill="#36aee6" /><path d="M938 257H1064V342H938Z" fill="url(#folder)" stroke="#2e9dd2" strokeWidth={1} /><circle cx={1000} cy={295} r={28} fill="#2fa3d8" /><path d="M995 279H1006V295H1017L1000 312L984 295H995Z" fill="#5ecbf7" />
      </D>
      <D x={1074} y={210}>
        <path d="M1085 250Q1085 243 1091 243H1115L1124 251H1208V270H1085Z" fill="#36aee6" /><path d="M1085 257H1211V342H1085Z" fill="url(#folder)" stroke="#2e9dd2" strokeWidth={1} /><path d="M1127 270H1152L1168 287V323H1127ZM1152 270V287H1168" stroke="#2997cb" strokeWidth={3} fill="#4abfee" />
      </D>
      <D x={1221} y={210}>
        <path d="M1245 237H1343L1331 343Q1329 352 1294 353Q1260 352 1257 343Z" fill="url(#trash)" /><ellipse cx={1294} cy={238} rx={48} ry={11} fill="#777" stroke="#eee" strokeWidth={3} />
        <path d="M1259 240L1269 229L1281 238L1292 228L1307 240L1319 230L1332 242L1315 251L1290 246L1270 252Z" fill="#f1f1f1" /><path d="M1277 238L1286 232L1290 243ZM1312 240L1322 233L1320 247Z" fill="#27808d" /><path d="M1295 236L1303 242L1294 248ZM1265 243L1272 237L1274 246Z" fill="#963238" />
        <path d="M1268 287L1306 272M1285 316L1318 297M1270 325L1300 335" stroke="#fff" strokeWidth={7} opacity={0.350} />
      </D>
    </div>
  );
}

/* ---------- menu bar ---------- */

const MENUS: [string, string][] = [
  ["File", "w-[41px]"], ["Modifica", "w-[75px]"], ["Visualizza", "w-[82px]"], ["Curve", "w-[57px]"], ["Superfici", "w-[76px]"],
  ["Solidi", "w-[55px]"], ["Mesh", "w-[54px]"], ["Quote", "w-[59px]"], ["Trasforma", "w-[84px]"], ["Strumenti", "w-[82px]"],
  ["Analizza", "w-[72px]"], ["Rendering", "w-[86px]"], ["Finestra", "w-[71px]"], ["Aiuti", "w-[46px]"],
];

function MenuBar() {
  return (
    <div className="flex h-[23px] shrink-0 items-center border-b border-[#34345a] bg-gradient-to-r from-[#1f2036] via-[#293354] to-[#281d31] text-[14px] leading-[22px] whitespace-nowrap text-white [-webkit-text-stroke:0.300px_#fff]">
      <FaApple className="mb-[2px] ml-[20px] h-[16px] w-[15px] shrink-0" />
      <span className="ml-[19px] w-[98px] shrink-0 font-bold tracking-[0.200px] [-webkit-text-stroke:0px]">Rhinoceros</span>
      {MENUS.map(([t, w]) => <span key={t} className={w + " shrink-0 tracking-[0.100px]"}>{t}</span>)}
      <FaBluetoothB className="ml-[1px] h-[16px] w-[13px] shrink-0 text-[#5a5872]" />
      <svg viewBox="476 5 69 54" className="ml-[13px] h-[18px] w-[23px] shrink-0" fill="none" stroke="#fff" strokeWidth={5}>
        <path d="M480 23Q508 0 537 23M488 32Q508 16 529 32M497 40Q508 31 520 40" /><path d="M502 45Q508 41 515 45L508 52Z" fill="#fff" stroke="none" />
      </svg>
      <svg viewBox="566 5 60 54" className="ml-[6px] h-[18px] w-[20px] shrink-0" fill="none" stroke="#fff">
        <path d="M570 27H578L592 16V50L578 40H570Z" fill="#fff" stroke="none" /><path d="M599 24Q607 33 599 43" strokeWidth={4} />
      </svg>
      <svg viewBox="666 5 75 54" className="ml-[14px] h-[18px] w-[25px] shrink-0" fill="none" stroke="#fff">
        <rect x={670} y={18} width={58} height={32} rx={4} strokeWidth={4} /><path d="M676 23H724V45H676Z" fill="#fff" stroke="none" /><path d="M733 28Q738 34 733 40Z" fill="#fff" /><path d="M710 14L684 37H697L691 54L717 31H704Z" fill="#fff" stroke="#292844" strokeWidth={4} />
      </svg>
      <span className="ml-[10px] w-[82px] shrink-0 tracking-[0.200px]">Lun 07:55</span>
      <span className="w-[71px] shrink-0 font-bold [-webkit-text-stroke:0px]">claudio</span>
      <svg viewBox="0 0 22 18" className="h-[18px] w-[22px] shrink-0" fill="none" stroke="#fff" strokeWidth={1.500}><circle cx={5.500} cy={8} r={4.500} /><path d="M9 11.500L13.500 16" strokeWidth={1.800} /></svg>
      <svg viewBox="0 0 20 18" className="ml-[7px] h-[18px] w-[20px] shrink-0" fill="none" stroke="#fff" strokeWidth={1.800}><path d="M4.500 5H16M4.500 9.500H16M4.500 14H18M0 5H2M0 9.500H2M0 14H2" /></svg>
    </div>
  );
}

/* ---------- window toolbar ---------- */

function Toolbar() {
  return (
    <div className="flex h-[57px] shrink-0 flex-col border-b border-[#b0adb1] bg-gradient-to-b from-[#e9e7e9] to-[#d0ced1]">
      <div className="flex h-[22px] items-center">
        <div className="flex w-[663px] gap-[8px] pl-[8px]">
          <span className="h-[12px] w-[12px] rounded-full border border-[#e2343f] bg-[#fc4550]" />
          <span className="h-[12px] w-[12px] rounded-full border border-[#e5a30f] bg-[#fdb90b]" />
          <span className="h-[12px] w-[12px] rounded-full border border-[#16b236] bg-[#0bcd3d]" />
        </div>
        <span className="pt-[2px] text-[13.500px] leading-[16px] tracking-[0.240px] text-[#454345]">logo-pipeline.2svg</span>
      </div>
      <div className="flex h-[29px] items-center text-[12.500px] leading-[17px] font-bold tracking-[0.120px] whitespace-nowrap text-[#454345]">
        <svg viewBox="0 0 20 20" className="ml-[14px] h-[20px] w-[20px]" fill="none"><rect x={0.750} y={0.750} width={18.500} height={18.500} stroke="#2878f8" strokeWidth={1.300} /><path d="M0 0H6V20H0Z" fill="#1169fc" /></svg>
        <span className="ml-[65px] w-[117px] pt-[2px]">Snap alla griglia</span>
        <span className="flex h-[17px] w-[60px] items-center justify-center rounded-[4px] bg-[#848284] pt-[2px] text-white">Orto</span>
        <span className="ml-[19px] w-[76px] pt-[2px]">Planare</span>
        <span className="w-[89px] pt-[2px]">SmartTrack</span>
        <span className="flex h-[17px] w-[73px] items-center justify-center rounded-[4px] bg-[#848284] pt-[2px] text-white">Gumball</span>
        <span className="ml-[19px] w-[364px] pt-[2px]">Storia di costruzione</span>
        <svg viewBox="0 0 56 24" className="h-[24px] w-[56px]" fill="none" stroke="#222">
          <circle cx={9.500} cy={12} r={8.700} stroke="#777" /><path d="M11 12.500H20.500" strokeWidth={1.300} /><rect x={8} y={11} width={3} height={3} fill="#fff" />
          <circle cx={41} cy={12} r={10} strokeWidth={1.200} /><circle cx={41} cy={12} r={5.500} strokeWidth={1.200} />
        </svg>
        <div className="ml-[5px] flex h-[22px] w-[200px] items-center rounded-[4px] bg-[#fcfcfc] shadow-[0_1px_0_#bbb]">
          <span className="ml-[7px] h-[14px] w-[14px] bg-black" />
          <span className="ml-[56px] pt-[2px] font-normal">Predefinito</span>
        </div>
        <svg viewBox="0 0 20 20" className="ml-[229px] h-[20px] w-[20px]" fill="none"><rect x={0.750} y={0.750} width={18.500} height={18.500} stroke="#2878f8" strokeWidth={1.300} /><path d="M14 0H20V20H14Z" fill="#1169fc" /></svg>
      </div>
    </div>
  );
}

function Viewport() {
  return (
    <svg viewBox="174 116 965 694" className="block h-[694px] w-[965px] bg-[#9da4ab]" fill="none" stroke="#fff" strokeWidth={1} fontFamily="Liberation Sans">
      <circle cx={672.300} cy={697} r={450.800} /><circle cx={672.300} cy={697} r={398.800} />
      <path d="M542.500 387A29.700 29.700 0 0 1 572 357.500" />
      <path d="M602.500 811V417.500H799.500L671 811" />
      <path d="M799 419L626.500 674.500A30 30 0 1 0 676.700 709L834 481.700C852 455 861.800 434 861.800 409C861.800 380 842 357.500 816 357.500" />
      <path d="M210 743V774H240" stroke="#747a80" strokeWidth={1.600} />
      <text x={213} y={746} fontSize={11} fontWeight={700} fill="#747a80" stroke="none">y</text>
      <text x={243} y={776} fontSize={11} fontWeight={700} fill="#747a80" stroke="none">x</text>
    </svg>
  );
}

export default function App() {
  return (
    <div className="relative flex h-[900px] w-[1440px] flex-col overflow-hidden bg-[#21141c] font-['Liberation_Sans',Arial,sans-serif]">
      <Defs />
      <MenuBar />
      <div className="relative h-[10px] shrink-0 overflow-hidden rounded-t-[4px] bg-[#363b3b]">
        <div className="flex h-[14px] items-start pt-[5px] pl-[8px]">
          <span className="mr-[8px] h-[12px] w-[12px] rounded-full bg-[#c9c7c9]" />
          <span className="mr-[8px] h-[12px] w-[12px] rounded-full bg-[#c9c7c9]" />
          <span className="h-[12px] w-[12px] rounded-full bg-[#c9c7c9]" />
          <span className="mt-[-2px] ml-[437px] text-[13.500px] leading-[15px] tracking-[0.200px] whitespace-pre text-[#9b9d9d]">• /Users/claudio/Desktop/FABfinal/classes.html (Primi passi) — Brackets</span>
        </div>
      </div>

      <div className="flex h-[805px] shrink-0 flex-col overflow-hidden rounded-[5px] bg-[#ececec]">
        <Toolbar />
        <div className="flex h-[720px] shrink-0">
          <aside className="flex w-[174px] shrink-0 flex-col overflow-hidden border-r border-black bg-[#ececec]">
            <div className="h-[26px] shrink-0 border-b border-[#d2d2d2] bg-gradient-to-b from-[#f9f9f9] to-[#e9e9e9]" />
            <div className="mt-[10px] ml-[8px] flex h-[22px] w-[157px] shrink-0 items-center border border-[#b4b4b4] bg-white pt-[3px] pl-[3px] text-[13.500px] leading-[16px] tracking-[0.200px] text-[#b9b9b9]">Comando</div>
            <div className="mt-[7px] h-[308px] shrink-0 overflow-hidden"><ToolGrid /></div>
            <div className="flex min-h-0 flex-1 flex-col overflow-hidden border-t border-[#c6c6c6] pt-[5px]">
              <div className="flex h-[18px] shrink-0 items-center gap-[4px] pl-[19px] text-[11.500px] leading-[16px] tracking-[0.130px]"><Radio on /><span className="pt-[2px]">Permanente</span></div>
              <div className="mb-[5px] flex h-[18px] shrink-0 items-center gap-[4px] pl-[19px] text-[11.500px] leading-[16px] tracking-[0.130px]"><Radio /><span className="pt-[2px]">Non permanente</span></div>
              {SNAPS.map(([l, s]) => <Check key={l} label={l} state={s} />)}
            </div>
          </aside>

          <main className="flex w-[966px] shrink-0 flex-col border-r border-black">
            <div className="flex h-[26px] shrink-0 items-center border-b border-[#9c9c9c] bg-gradient-to-b from-[#f9f9f9] to-[#e6e6e6] text-[13.500px] leading-[19px] tracking-[0.220px] text-[#4a4a4a]">
              <svg viewBox="0 0 22 20" className="ml-[6px] h-[20px] w-[22px]" fill="none"><path d="M1.500 1.500H21.500V19.500H1.500ZM11.500 1.500V19.500M1.500 10.500H21.500" stroke="#777" /><path d="M1 2H5.500M12 2H16M1 11H5.500M12 11H16" stroke="#333" strokeWidth={1.600} /></svg>
              <svg viewBox="0 0 22 20" className="ml-[10px] h-[20px] w-[22px]" fill="none"><path d="M1.500 1.500H21.500V19.500H1.500Z" stroke="#77a8f8" /><path d="M1 2H5.500" stroke="#1169fc" strokeWidth={2} /></svg>
              <span className="ml-[11px] h-[14px] w-px bg-[#888]" /><span className="ml-[19px] w-[91px] pt-[2px]">Prospettica</span>
              <span className="h-[14px] w-px bg-[#888]" /><span className="ml-[19px] w-[80px] pt-[2px] text-[#1a6ef0]">Superiore</span>
              <span className="h-[14px] w-px bg-[#888]" /><span className="ml-[19px] w-[71px] pt-[2px]">Frontale</span>
              <span className="h-[14px] w-px bg-[#888]" /><span className="ml-[19px] pt-[2px]">Destra</span>
            </div>
            <div className="relative">
              <Viewport />
              <span className="absolute top-[1px] left-[1px] h-[19px] w-[65px] bg-[#2f639c] pl-[4px] text-[12px] leading-[20px] font-bold tracking-[0.050px] text-white">Superiore</span>
            </div>
          </main>

          <aside className="flex w-[300px] shrink-0 flex-col overflow-hidden">
            <div className="flex h-[362px] shrink-0 flex-col border-b-2 border-[#8f8f8f]"><Panel named={false} /></div>
            <div className="flex h-[358px] shrink-0 flex-col"><Panel named /></div>
          </aside>
        </div>

        <footer className="flex h-[28px] shrink-0 items-center border-t border-[#c2c2c2] bg-gradient-to-b from-[#d3d3d3] to-[#c3c3c3] pt-[2px] text-[11.500px] whitespace-nowrap text-black">
          <svg viewBox="0 0 14 12" className="ml-[5px] h-[12px] w-[14px]"><path d="M0 1.500H14M0 4.500H14M0 7.500H14M0 10.500H14" stroke="#555" /></svg>
          <span className="ml-[2px] w-[982px] tracking-[0.200px]">Oggetti XRef letti: 0, tralasciati: 0</span>
          <span className="flex h-[16px] w-[70px] items-center justify-between rounded-[4px] border border-[#8c8c8c] pr-[4px] pl-[6px] text-[#222]">
            PianoC
            <svg viewBox="0 0 8 12" className="h-[12px] w-[8px]" fill="none" stroke="#888"><path d="M1 4.500L4 1.500L7 4.500M1 7.500L4 10.500L7 7.500" /></svg>
          </span>
          <span className="ml-[14px] w-[82px]">X: 201.1890</span>
          <span className="w-[85px]">Y: 444.5017</span>
          <span>Z: 0.0000</span>
        </footer>
      </div>

      <div className="flex h-[62px] shrink-0 bg-gradient-to-r from-[#2a1820] via-[#251820] to-[#21182a] pt-[2px] pl-[40px]"><Dock /></div>

      <div className="absolute top-[119px] left-[1147px] h-[136px] w-[180px] bg-[#ebebeb] shadow-[0_2px_7px_rgba(0,0,0,0.450)]">
        <div className="flex h-[15px] items-center border-b border-[#cfcfcf] bg-[#f4f4f4] pl-[6px]">
          <span className="h-[11px] w-[11px] rounded-full border border-[#c4c4c4] bg-[#d4d4d4]" />
          <span className="ml-[44px] pt-[3px] text-[11.500px] leading-[14px] tracking-[0.050px] whitespace-nowrap text-[#8c8c8c]">Creazione di superfici</span>
        </div>
        <SurfaceGrid />
      </div>
    </div>
  );
}
